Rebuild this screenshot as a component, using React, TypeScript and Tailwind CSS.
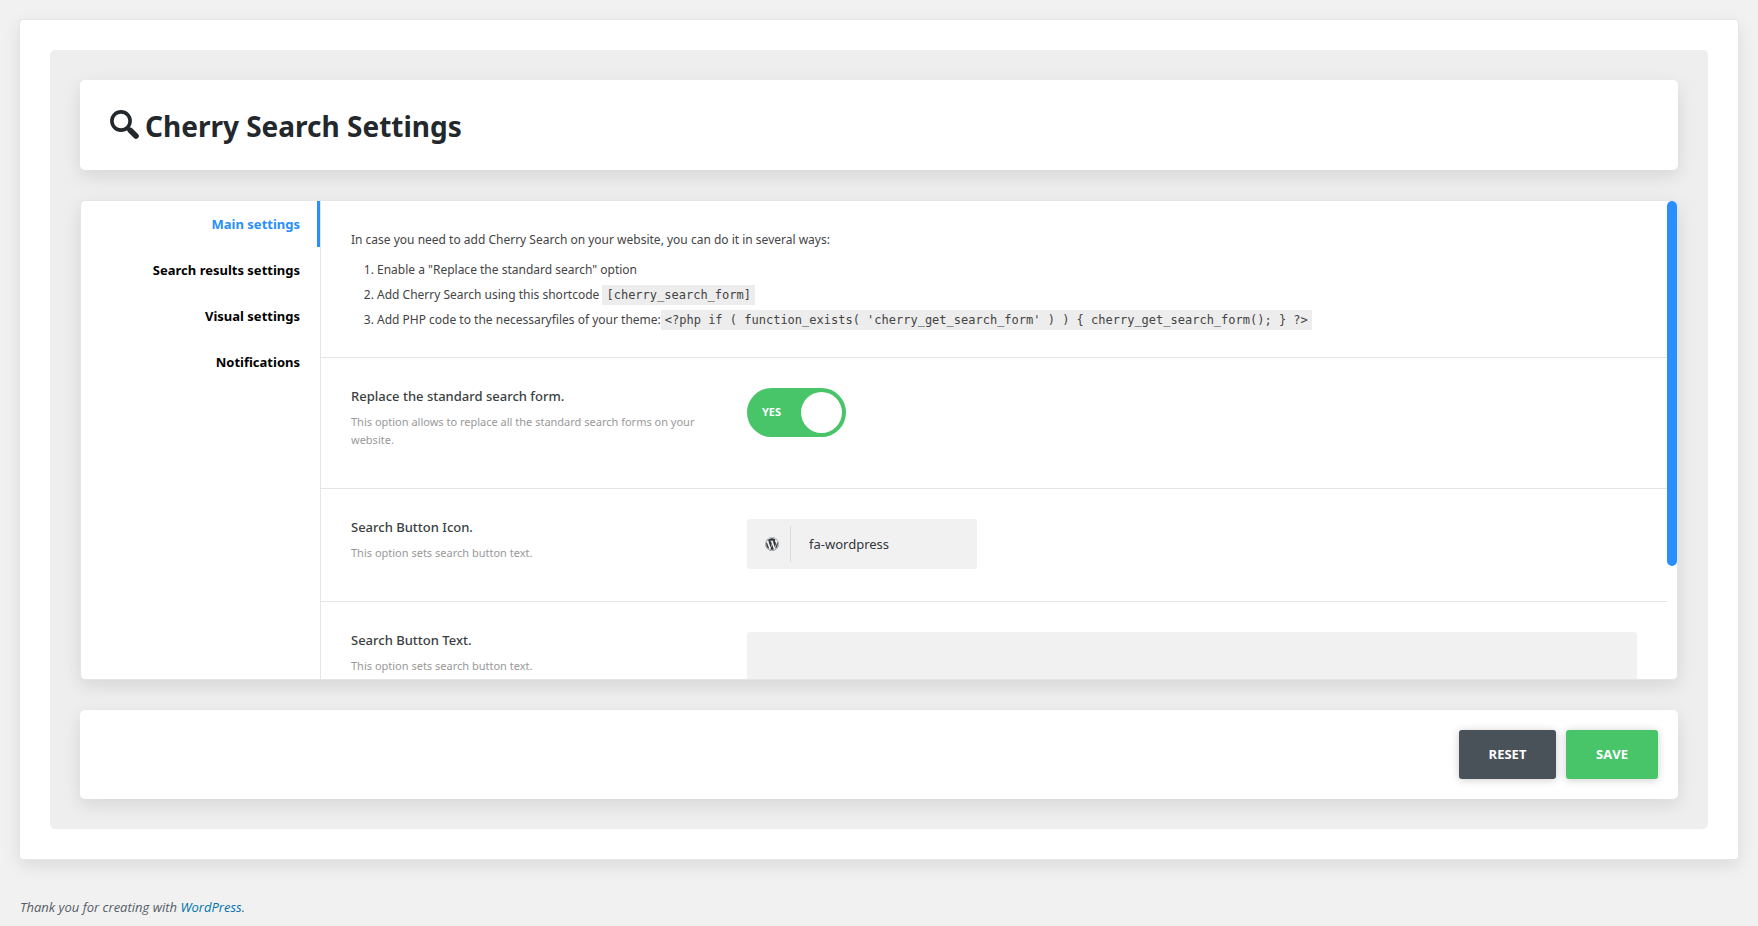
import { useState } from "react";
import type { ReactNode } from "react";
import { FaWordpress } from "react-icons/fa";

const tabs = ["Main settings", "Search results settings", "Visual settings", "Notifications"];

const cardShadow = "shadow-[0_6px_18px_rgba(0,0,0,0.1)]";

function SearchGlyph() {
  return (
    <svg viewBox="0 0 29 29" className="mb-1 size-[29px] shrink-0" fill="none" stroke="currentColor" aria-hidden="true">
      <circle cx="11" cy="11" r="9.1" strokeWidth="3.6" />
      <path d="M17 17.4 L19.4 19.8" strokeWidth="4" />
      <path d="M20.4 20.4 L26 26" strokeWidth="5.6" strokeLinecap="round" />
    </svg>
  );
}

function SettingRow({ id, title, description, children }: { id: string; title: string; description: string; children: ReactNode }) {
  return (
    <div className="flex gap-9 border-b border-[#e5e5e5] p-[30px]">
      <div className="w-[360px] shrink-0">
        <label htmlFor={id} className="block text-[13px] leading-4 font-medium text-[#3b3f42]">
          {title}
        </label>
        <p className="mt-[9px] text-[11px] leading-[18px] text-[#999]">{description}</p>
      </div>
      <div className="min-w-0 flex-1">{children}</div>
    </div>
  );
}

function Code({ children }: { children: ReactNode }) {
  return (
    <code className="inline-block bg-[#ededed] px-1 font-['DejaVu_Sans_Mono',monospace] text-[12px] leading-5">{children}</code>
  );
}

export default function App() {
  const [active, setActive] = useState(0);
  const [replace, setReplace] = useState(true);

  return (
    <div className="min-h-screen bg-[#f1f1f1] p-5 font-['Noto_Sans','Open_Sans',sans-serif] text-[#444]">
      <main className={`rounded-[3px] bg-white p-[30px] ring-1 ring-[#e5e5e5] ${cardShadow}`}>
        <div className="flex flex-col gap-[30px] rounded-[5px] bg-[#eee] p-[30px]">
          <header className={`flex h-[90px] items-center gap-[6px] rounded-[5px] bg-white px-[30px] pt-[2px] text-[#23282d] ${cardShadow}`}>
            <SearchGlyph />
            <h1 className="text-[28px] leading-9 font-bold">Cherry Search Settings</h1>
          </header>

          <section className={`flex h-[480px] overflow-hidden rounded-[5px] border border-[#e5e5e5] bg-white ${cardShadow}`}>
            <nav className="flex w-60 shrink-0 flex-col border-r border-[#e5e5e5]">
              {tabs.map((tab, i) => (
                <button
                  key={tab}
                  type="button"
                  onClick={() => setActive(i)}
                  className={`h-[46px] border-r-[3px] pt-[2px] pr-[17px] text-right text-[13px] font-bold ${
                    i === active ? "border-[#298ffc] text-[#298ffc]" : "border-transparent text-black"
                  }`}
                >
                  {tab}
                </button>
              ))}
            </nav>

            <div className="min-w-0 flex-1 overflow-hidden">
              <div className="border-b border-[#e5e5e5] px-[30px] pt-[31px] pb-[27px] text-[12px]">
                <p className="leading-4">In case you need to add Cherry Search on your website, you can do it in several ways:</p>
                <ol className="mt-3 flex list-decimal flex-col gap-[5px] pl-[26px] leading-5">
                  <li>Enable a "Replace the standard search" option</li>
                  <li>
                    Add Cherry Search using this shortcode <Code>[cherry_search_form]</Code>
                  </li>
                  <li>
                    Add PHP code to the necessaryfiles of your theme:
                    <Code>{"<?php if ( function_exists( 'cherry_get_search_form' ) ) { cherry_get_search_form(); } ?>"}</Code>
                  </li>
                </ol>
              </div>

              <SettingRow
                id="replace"
                title="Replace the standard search form."
                description="This option allows to replace all the standard search forms on your website."
              >
                <button
                  id="replace"
                  type="button"
                  role="switch"
                  aria-checked={replace}
                  onClick={() => setReplace(!replace)}
                  className="mb-[21px] flex h-[49px] w-[99px] items-center justify-between rounded-full bg-[#48c569] pr-1 pl-[15px] font-['Open_Sans',sans-serif] text-[11px] font-bold text-white"
                >
                  {replace ? "YES" : "NO"}
                  <span className="size-[41px] rounded-full bg-white" />
                </button>
              </SettingRow>

              <SettingRow id="icon" title="Search Button Icon." description="This option sets search button text.">
                <div className="mb-[2px] flex h-[50px] w-[230px] items-center rounded-[3px] bg-[#f1f1f1]">
                  <span className="flex h-9 w-11 items-center justify-end border-r border-[#ddd] pr-[11px] text-[#32373c]">
                    <FaWordpress className="size-[14px]" />
                  </span>
                  <input
                    id="icon"
                    defaultValue="fa-wordpress"
                    className="min-w-0 flex-1 bg-transparent px-[18px] pt-[2px] text-[13px] text-[#32373c] outline-none"
                  />
                </div>
              </SettingRow>

              <SettingRow id="text" title="Search Button Text." description="This option sets search button text.">
                <input id="text" className="h-[50px] w-full rounded-[3px] bg-[#f1f1f1] px-4 text-[13px] outline-none" />
              </SettingRow>
            </div>

            <div className="w-[10px] shrink-0">
              <div className="h-[365px] rounded-full bg-[#298ffc]" />
            </div>
          </section>

          <footer className={`flex justify-end gap-[10px] rounded-[5px] bg-white p-5 font-['Open_Sans',sans-serif] ${cardShadow}`}>
            <button type="button" className="h-[49px] w-[97px] rounded-[3px] bg-[#495159] text-[13px] font-bold text-white shadow-[0_1px_8px_rgba(0,0,0,0.2)]">
              RESET
            </button>
            <button type="button" className="h-[49px] w-[92px] rounded-[3px] bg-[#48c569] text-[13px] font-bold text-white shadow-[0_1px_8px_rgba(0,0,0,0.2)]">
              SAVE
            </button>
          </footer>
        </div>
      </main>

      <p className="mt-[38px] font-['Open_Sans',sans-serif] text-[13px] leading-5 text-[#555d66] italic">
        Thank you for creating with{" "}
        <a href="#wordpress" className="text-[#0073aa]">
          WordPress
        </a>
        .
      </p>
    </div>
  );
}
